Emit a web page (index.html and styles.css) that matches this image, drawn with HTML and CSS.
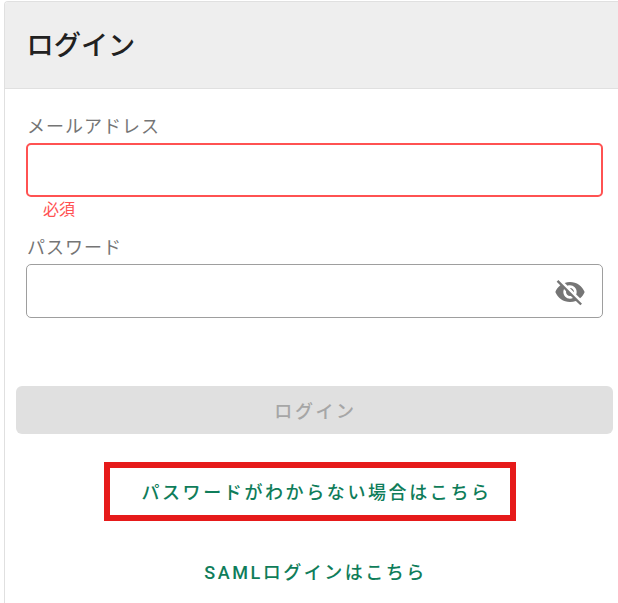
FILE: index.html
```html
<!DOCTYPE html>
<html lang="ja">
<head>
<meta charset="utf-8">
<title>ログイン</title>
<link rel="stylesheet" href="styles.css">
</head>
<body>
<main class="card">
  <header class="card-header"><h1>ログイン</h1></header>
  <form class="card-body">
    <div class="field">
      <label class="label" for="email">メールアドレス</label>
      <div class="input-box input-error"><input id="email" type="email"></div>
      <p class="error">必須</p>
    </div>
    <div class="field field-password">
      <label class="label" for="password">パスワード</label>
      <div class="input-box">
        <input id="password" type="password">
        <svg class="eye" viewBox="0 0 24 24" aria-hidden="true"><path d="M12 7c2.76 0 5 2.24 5 5 0 .65-.13 1.26-.36 1.83l2.92 2.92c1.51-1.26 2.7-2.89 3.43-4.75-1.73-4.39-6-7.5-11-7.5-1.4 0-2.74.25-3.98.7l2.16 2.16C10.74 7.13 11.35 7 12 7zM2 4.27l2.28 2.28.46.46C3.08 8.3 1.78 10.02 1 12c1.73 4.39 6 7.5 11 7.5 1.55 0 3.03-.3 4.38-.84l.42.42L19.73 22 21 20.73 3.27 3 2 4.27zM7.53 9.8l1.55 1.55c-.05.21-.08.43-.08.65 0 1.66 1.34 3 3 3 .22 0 .44-.03.65-.08l1.55 1.55c-.67.33-1.41.53-2.2.53-2.76 0-5-2.24-5-5 0-.79.2-1.53.53-2.2zm4.31-.78l3.15 3.15.02-.16c0-1.66-1.34-3-3-3l-.17.01z"/></svg>
      </div>
    </div>
    <button class="submit" type="button" disabled>ログイン</button>
    <div class="links">
      <a class="link link-marked" href="#">パスワードがわからない場合はこちら</a>
      <a class="link link-saml" href="#">SAMLログインはこちら</a>
    </div>
  </form>
</main>
</body>
</html>
```
FILE: styles.css
```css
* { box-sizing: border-box; }
html, body { margin: 0; height: 603px; overflow: hidden; background: #fff; }
body {
  font-family: Roboto, "Noto Sans CJK JP", sans-serif;
  padding: 1px 0 0 4px;
}
.card {
  width: 614px;
  height: 602px;
  border: 1px solid #e0e0e0;
  border-width: 1px 0 0 1px;
  border-radius: 4px 0 0 0;
  overflow: hidden;
}
.card-header {
  height: 87px;
  background: #eeeeee;
  border-bottom: 1px solid #e0e0e0;
  display: flex;
  align-items: center;
  padding-left: 21.5px;
}
.card-header h1 {
  margin: 2px 0 0;
  font-size: 27.2px;
  font-weight: 500;
  color: #212121;
  line-height: 40px;
}
.card-body { padding: 0 0 0 11px; }
.field { margin-left: 10px; width: 577px; }
.label {
  display: block;
  font-size: 18px;
  letter-spacing: 1px;
  line-height: 24px;
  color: #757575;
  padding-left: 1px;
  padding-top: 26px;
  height: 54px;
}
.input-box {
  display: flex;
  align-items: center;
  height: 54px;
  border: 1px solid #9e9e9e;
  border-radius: 5px;
  background: #fff;
  padding-right: 16px;
}
.input-error { border: 2px solid #ff5252; }
.input-box input {
  flex: 1;
  min-width: 0;
  height: 100%;
  border: 0;
  outline: 0;
  background: transparent;
}
.error {
  margin: 0;
  padding: 1px 0 0 17px;
  height: 24px;
  font-size: 16px;
  line-height: 24px;
  color: #ff5252;
}
.field-password .label { height: 43px; padding-top: 15px; }
.eye { width: 32px; height: 32px; fill: #757575; flex: none; margin-top: 2px; }
.submit {
  display: block;
  width: 597px;
  height: 48px;
  margin-top: 68px;
  padding-left: 8px;
  border: 0;
  border-radius: 6px;
  background: #e0e0e0;
  color: #a6a6a6;
  font: 500 18px Roboto, "Noto Sans CJK JP", sans-serif;
  letter-spacing: 2.6px;
}
.links {
  width: 597px;
  display: flex;
  flex-direction: column;
  align-items: center;
}
.link {
  color: #0f7d5a;
  text-decoration: none;
  font-size: 18px;
  font-weight: 500;
  letter-spacing: 2.6px;
  line-height: 24px;
}
.link-marked {
  margin: 28px 10px 0 0;
  padding: 2px 0 0 14px;
  width: 412px;
  height: 59px;
  border: 6px solid #e61a1a;
  display: flex;
  align-items: center;
  justify-content: center;
}
.link-saml {
  margin: 40px 0 0 2px;
  letter-spacing: 2.5px;
}
```
